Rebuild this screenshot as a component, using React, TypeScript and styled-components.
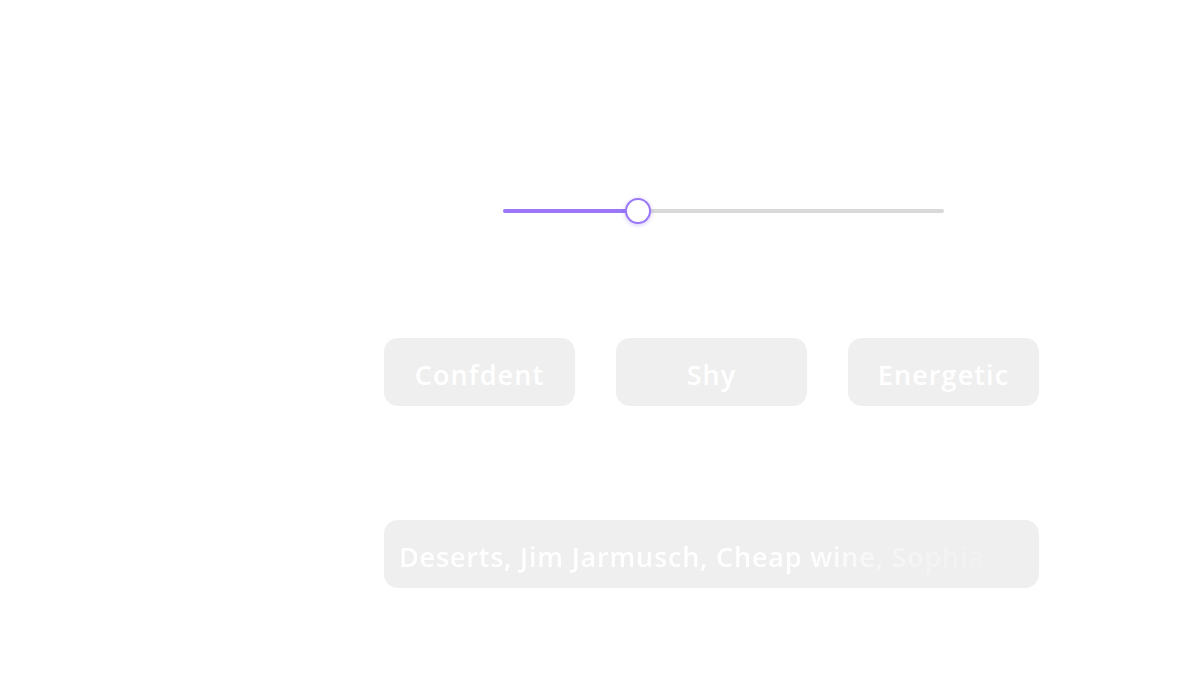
import { useState } from 'react'
import styled, { createGlobalStyle } from 'styled-components'

const Global = createGlobalStyle`
  html, body {
    margin: 0;
    padding: 0;
    background: #ffffff;
    font-family: 'Open Sans', 'Noto Sans', sans-serif;
  }
`

const Page = styled.div`
  width: 1184px;
  height: 673px;
  display: flex;
  flex-direction: column;
  padding: 196px 0 0 384px;
  box-sizing: border-box;
`

const SliderRow = styled.div`
  width: 655px;
  display: flex;
  padding-left: 119px;
  box-sizing: border-box;
`

const Track = styled.div`
  position: relative;
  width: 441px;
  height: 30px;
  display: flex;
  align-items: center;
`

const Rail = styled.div`
  width: 100%;
  height: 4px;
  border-radius: 2px;
  background: #d9d9d9;
`

const Fill = styled.div`
  position: absolute;
  left: 0;
  top: 13px;
  height: 4px;
  border-radius: 2px;
  background: #9a78f8;
`

const Thumb = styled.div`
  position: absolute;
  top: 2px;
  width: 22px;
  height: 22px;
  margin-left: -13px;
  border-radius: 50%;
  background: #ffffff;
  border: 2px solid #9a78f8;
  box-shadow: 0 1px 4px rgba(120, 90, 220, 0.35);
`

const Choices = styled.div`
  display: flex;
  gap: 41px;
  margin-top: 112px;
`

const Choice = styled.button`
  width: 191px;
  height: 68px;
  border: none;
  border-radius: 14px;
  background: #efefef;
  color: #ffffff;
  font-family: 'Open Sans', 'Noto Sans', sans-serif;
  font-size: 27px;
  font-weight: 600;
  letter-spacing: 1.1px;
  padding: 4px 0 0;
  cursor: pointer;
`

const Interests = styled.div`
  width: 655px;
  height: 68px;
  margin-top: 114px;
  border-radius: 14px;
  background: #efefef;
  display: flex;
  align-items: center;
  padding: 4px 15px 0;
  box-sizing: border-box;
  overflow: hidden;
`

const FadeText = styled.span`
  font-family: 'Open Sans', 'Noto Sans', sans-serif;
  font-size: 27px;
  font-weight: 600;
  letter-spacing: 0.8px;
  white-space: nowrap;
  background: linear-gradient(90deg, #ffffff 0%, #ffffff 70%, #f6f6f6 82%, #f1f1f1 100%);
  -webkit-background-clip: text;
  background-clip: text;
  color: transparent;
`

const moods = ['Confdent', 'Shy', 'Energetic']

export default function App() {
  const [level] = useState(0.307)

  return (
    <>
      <Global />
      <Page>
        <SliderRow>
          <Track>
            <Rail />
            <Fill style={{ width: `${level * 100}%` }} />
            <Thumb style={{ left: `${level * 100}%` }} />
          </Track>
        </SliderRow>
        <Choices>
          {moods.map((m) => (
            <Choice key={m}>{m}</Choice>
          ))}
        </Choices>
        <Interests>
          <FadeText>Deserts, Jim Jarmusch, Cheap wine, Sophia</FadeText>
        </Interests>
      </Page>
    </>
  )
}
